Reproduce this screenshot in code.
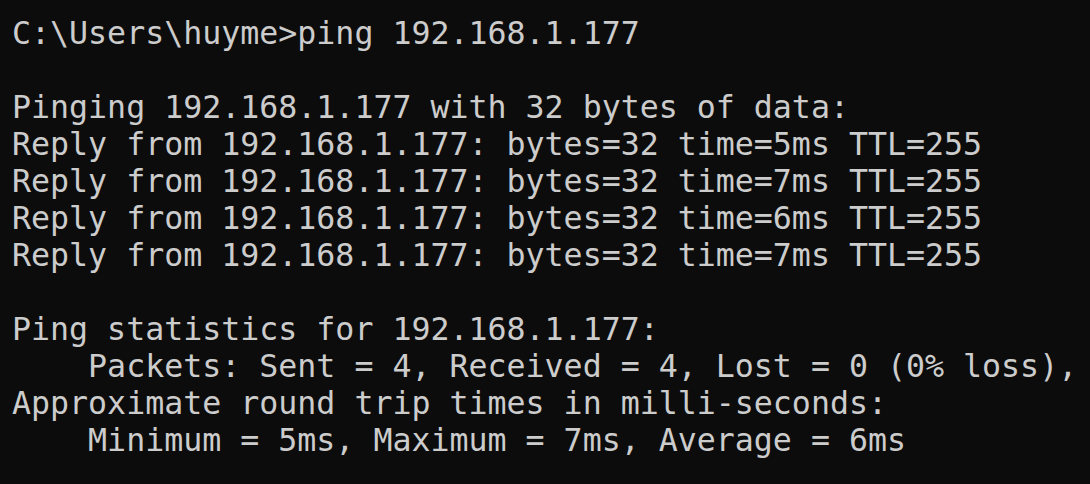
import React from 'react';

const lines = [
  'C:\\Users\\huyme>ping 192.168.1.177',
  '',
  'Pinging 192.168.1.177 with 32 bytes of data:',
  'Reply from 192.168.1.177: bytes=32 time=5ms TTL=255',
  'Reply from 192.168.1.177: bytes=32 time=7ms TTL=255',
  'Reply from 192.168.1.177: bytes=32 time=6ms TTL=255',
  'Reply from 192.168.1.177: bytes=32 time=7ms TTL=255',
  '',
  'Ping statistics for 192.168.1.177:',
  '    Packets: Sent = 4, Received = 4, Lost = 0 (0% loss),',
  'Approximate round trip times in milli-seconds:',
  '    Minimum = 5ms, Maximum = 7ms, Average = 6ms',
];

export default function App() {
  return (
    <div className="w-[1090px] h-[484px] overflow-hidden bg-[#0c0c0c] pl-[12px] pt-[15px]">
      <div className="font-['DejaVu_Sans_Mono',monospace] text-[31.6px] leading-[37px] text-[#cccccc] whitespace-pre">
        {lines.map((line, i) => (
          <div key={i} className="h-[37px]">
            {line}
          </div>
        ))}
      </div>
    </div>
  );
}
